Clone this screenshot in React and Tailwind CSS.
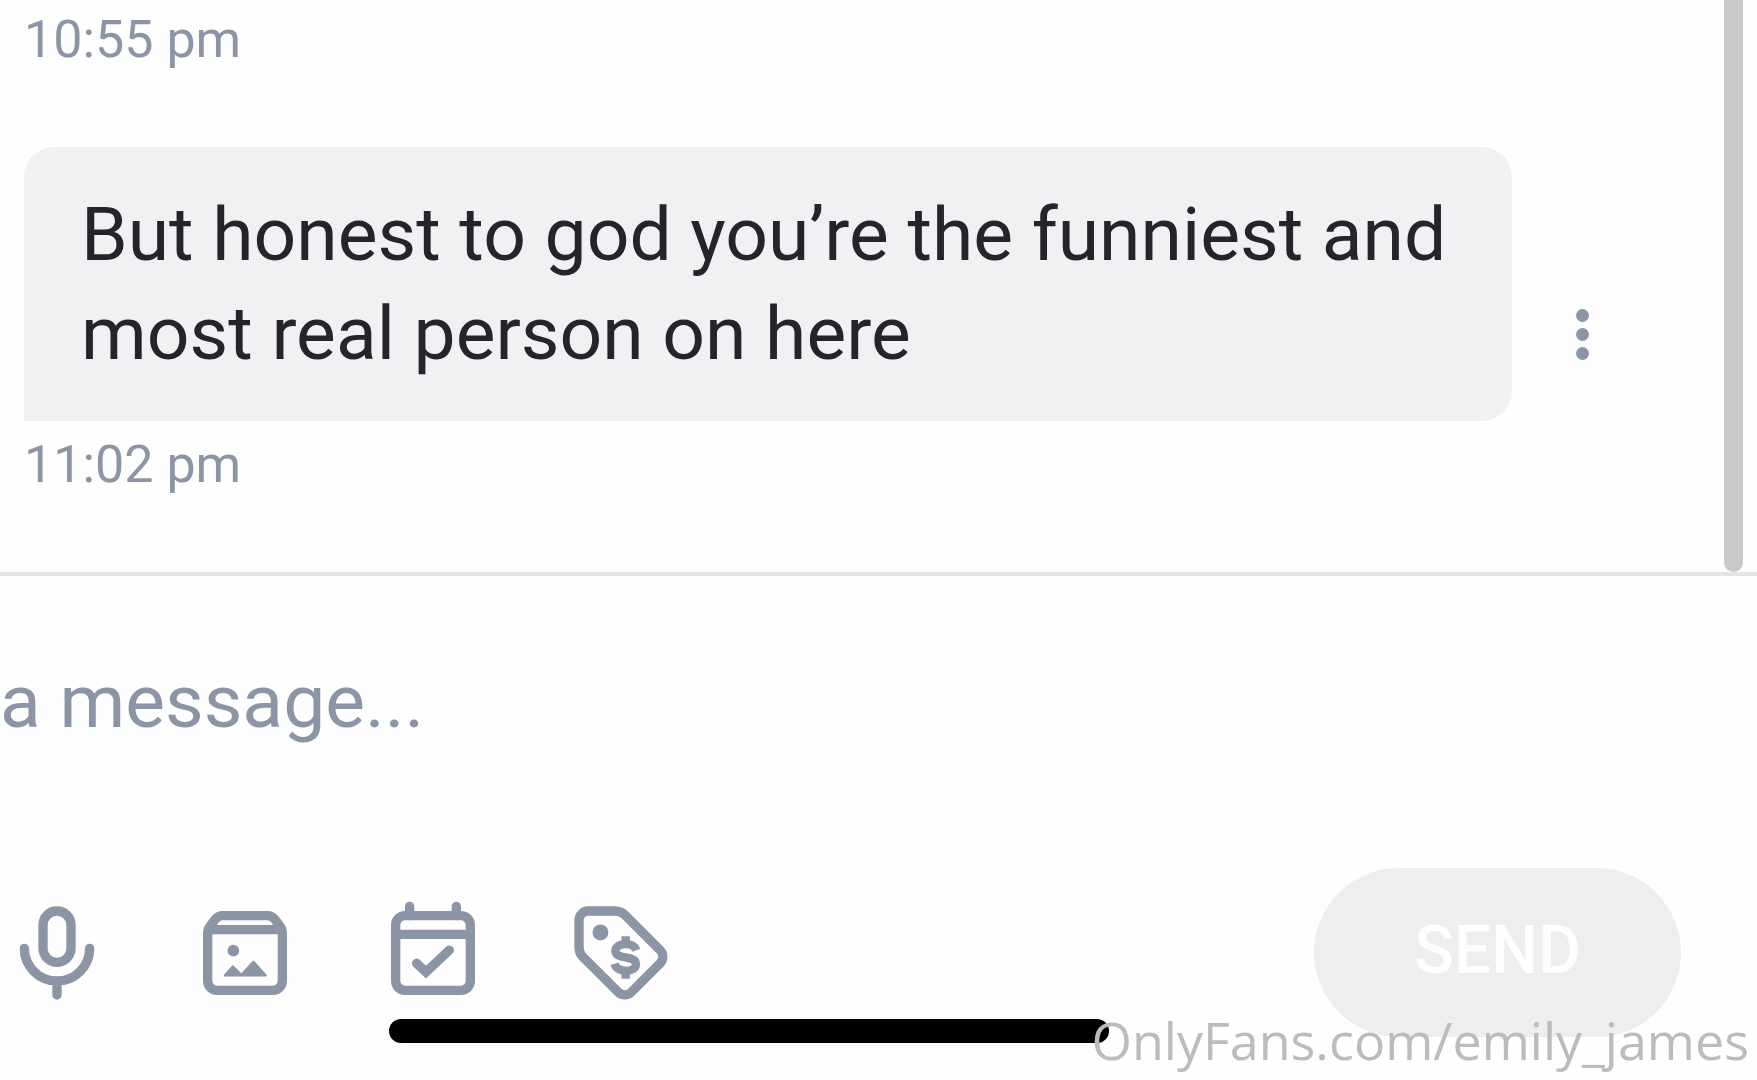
import React from 'react';

const iconProps = {
  viewBox: '0 0 24 24',
  className: 'size-28',
  fill: 'none',
  stroke: 'currentColor',
  strokeWidth: 2,
  'aria-hidden': true
};

const MicIcon = () => (
  <svg {...iconProps} strokeLinecap="round">
    <rect x="9" y="3" width="6" height="11" rx="3" />
    <path d="M5 11a7 7 0 0 0 14 0M12 18v3" />
  </svg>
);

const GalleryIcon = () => (
  <svg {...iconProps}>
    <path d="M4 18V7.6a2 2 0 0 1 .4-1.2l1.2-1.6A2 2 0 0 1 7.2 4h9.6a2 2 0 0 1 1.6.8l1.2 1.6a2 2 0 0 1 .4 1.2V18a2 2 0 0 1-2 2H6a2 2 0 0 1-2-2zM4 7h16" />
    <circle cx="9.5" cy="11.5" r="1.25" fill="currentColor" stroke="none" />
    <path
      d="M7.7 16.8l1.7-1.9 1.8 1.8 2.6-2.8 2.6 2.9z"
      fill="currentColor"
      strokeWidth="0.5"
      strokeLinejoin="round"
    />
  </svg>
);

const CalendarIcon = () => (
  <svg {...iconProps} strokeLinecap="round">
    <rect x="4" y="4" width="16" height="16" rx="2" />
    <path d="M4 8h16M7 2v2M17 2v2M8.5 14.2l2 1.9 5-4.7" />
  </svg>
);

const PriceTagIcon = () => (
  <svg {...iconProps}>
    <path d="M5 3h5.8a3 3 0 0 1 2.1.9l7.5 7.5a2 2 0 0 1 0 2.8l-6.2 6.2a2 2 0 0 1-2.8 0l-7.5-7.5a3 3 0 0 1-.9-2.1V5a2 2 0 0 1 2-2z" />
    <circle cx="7.6" cy="7.6" r="1.7" fill="currentColor" stroke="none" />
    <path
      d="M15.3 11.4c-.3-.8-1.1-1.3-2.3-1.3s-2.2.5-2.2 1.4c0 2.1 4.4.8 4.4 2.9 0 .9-.9 1.4-2.2 1.4s-2.1-.5-2.4-1.5M13 8.4V10M13 15.8v1.7"
      strokeWidth="1.8"
    />
  </svg>
);

const tools = [
  { label: 'Record audio', Icon: MicIcon },
  { label: 'Add from gallery', Icon: GalleryIcon },
  { label: 'Schedule message', Icon: CalendarIcon },
  { label: 'Set price', Icon: PriceTagIcon }
];

const MessageTime = ({ children }) => (
  <time className="block text-[52px] leading-16 text-[#8c95a5]">{children}</time>
);

const Message = ({ text, time }) => (
  <div className="mb-[75px]">
    <div className="mb-3 flex">
      <p className="flex-1 rounded-[30px] rounded-bl-none bg-[#f0f1f3] px-[57px] py-[38px] text-[75px] leading-[99px] text-[#242529]">
        {text}
      </p>
      <button
        type="button"
        aria-label="Message options"
        className="flex w-[140px] flex-col items-center justify-center gap-[6px] pt-[100px]"
      >
        <span className="size-[13px] rounded-full bg-[#8c95a5]"></span>
        <span className="size-[13px] rounded-full bg-[#8c95a5]"></span>
        <span className="size-[13px] rounded-full bg-[#8c95a5]"></span>
      </button>
    </div>
    <MessageTime>{time}</MessageTime>
  </div>
);

const App = () => {
  return (
    <main className="relative min-h-screen overflow-hidden bg-[#fefefe] font-['Roboto',sans-serif]">
      {/* Conversation */}
      <section className="flex border-b-4 border-[#e3e5ea] pr-[14px]">
        <div className="flex-1 pt-2 pr-[72px] pl-6">
          <div className="mb-[75px]">
            <MessageTime>10:55 pm</MessageTime>
          </div>
          <Message
            text="But honest to god you’re the funniest and most real person on here"
            time="11:02 pm"
          />
        </div>
        <div className="w-[19px] rounded-b-full bg-[#cacaca]"></div>
      </section>

      {/* Composer */}
      <form className="pt-[76px] pb-[43px]" onSubmit={(e) => e.preventDefault()}>
        <input
          type="text"
          aria-label="Message"
          placeholder="a message..."
          className="mb-[117px] block h-[99px] w-full text-[75px] leading-[99px] text-[#242529] outline-none placeholder:text-[#8c95a5]"
        />
        <div className="flex items-center justify-between pr-[76px] pl-px">
          <div className="flex gap-19 text-[#8c95a5]">
            {tools.map(({ label, Icon }) => (
              <button key={label} type="button" aria-label={label}>
                <Icon />
              </button>
            ))}
          </div>
          <button
            type="submit"
            className="h-[169px] w-[367px] rounded-full bg-[#edeef0] pb-1 text-[66px] font-medium text-[#fefefe]"
          >
            SEND
          </button>
        </div>
      </form>

      {/* Home indicator and watermark sit on top of the composer */}
      <div className="absolute bottom-[37px] left-[389px] h-6 w-[41%] rounded-full bg-black"></div>
      <span className="absolute right-2 bottom-1 font-['Open_Sans',sans-serif] text-[52px] leading-[72px] text-[#bcbcbc]">
        OnlyFans.com/emily_james
      </span>
    </main>
  );
};

export default App;
